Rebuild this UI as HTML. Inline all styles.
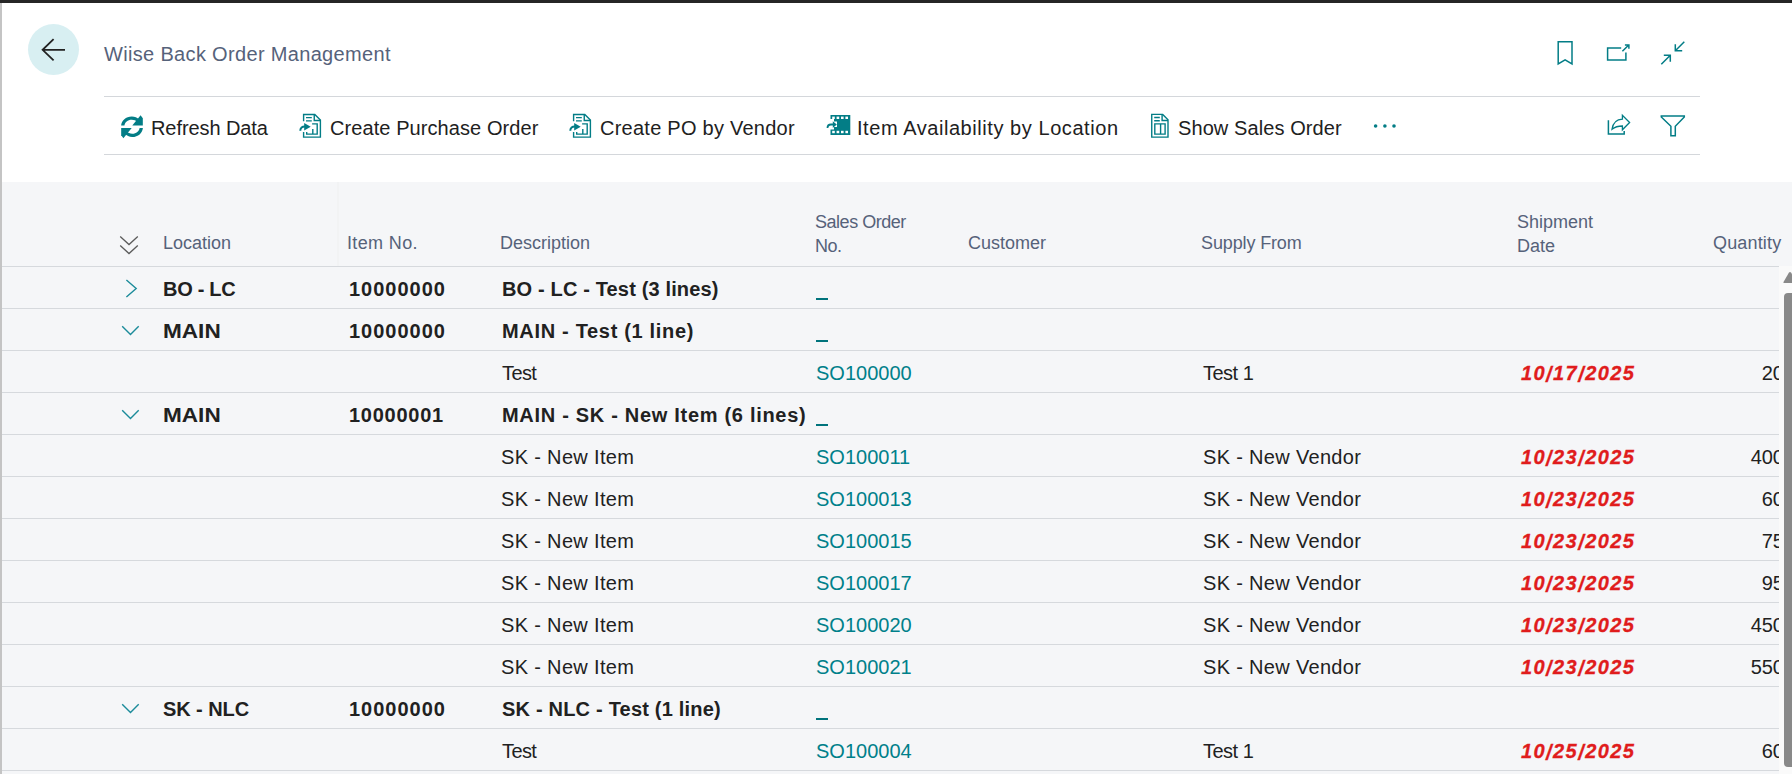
<!DOCTYPE html>
<html><head><meta charset="utf-8">
<style>
html,body{margin:0;padding:0;width:1792px;height:774px;overflow:hidden;background:#fff;}
body{position:relative;font-family:"Liberation Sans",sans-serif;}
.t{position:absolute;white-space:nowrap;line-height:20px;font-size:20px;color:#212121;}
.h{position:absolute;white-space:nowrap;line-height:24px;font-size:18px;color:#56627a;}
.ab{position:absolute;}
#topbar{position:absolute;left:0;top:0;width:1792px;height:3px;background:#262626;}
#leftbar{position:absolute;left:0;top:3px;width:2px;height:771px;background:#c4c4c4;}
#grid{position:absolute;left:2px;top:182px;width:1790px;height:592px;background:#f5f6f8;}
.hl{position:absolute;left:2px;width:1777px;height:1px;background:#d6d9dd;}
.b{font-weight:bold;}
.lnk{color:#00808a;}
.red{color:#e01c1c;font-weight:bold;font-style:italic;-webkit-text-stroke:0.3px #e01c1c;}
.sl{display:inline-block;transform:translateY(1.5px) scaleY(1.12);}
.qclip{position:absolute;left:1600px;width:179px;overflow:hidden;height:42px;}
</style></head>
<body>
<div id="topbar"></div>
<div id="leftbar"></div>

<!-- back button -->
<div class="ab" style="left:28px;top:24px;width:51px;height:51px;border-radius:50%;background:#d8eff2;"></div>
<svg class="ab" style="left:40px;top:36px" width="26" height="26" viewBox="0 0 26 26">
 <path d="M2.6 13.8 H25 M13.6 3.2 L2.6 13.8 L13.6 24.4" fill="none" stroke="#222" stroke-width="1.8"/>
</svg>

<div class="t" style="left:104px;top:44px;color:#56627a;letter-spacing:0.33px;">Wiise Back Order Management</div>

<!-- top right icons -->
<svg class="ab" style="left:1550px;top:35px" width="140" height="36" viewBox="1550 35 140 36">
 <path d="M1558.2 41.7 H1572 V64 L1565.1 59.8 L1558.2 64 Z" fill="none" stroke="#037d86" stroke-width="1.5"/>
 <path d="M1621.2 47.9 H1607.6 V60.1 H1625.9 V52.6" fill="none" stroke="#037d86" stroke-width="1.5"/>
 <path d="M1622.4 51.3 L1629 44.7 M1624.9 44.9 H1628.9 V48.8" fill="none" stroke="#037d86" stroke-width="1.5"/>
 <path d="M1684.3 41.7 L1675.3 50.7 M1675.3 44.2 V50.7 H1682.2" fill="none" stroke="#037d86" stroke-width="1.5"/>
 <path d="M1661.3 64.3 L1670.3 55.3 M1663.8 55.3 H1670.3 V61.8" fill="none" stroke="#037d86" stroke-width="1.5"/>
</svg>

<div class="hl" style="left:104px;width:1596px;top:96px;background:#d4d7db;"></div>
<div class="hl" style="left:104px;width:1596px;top:154px;background:#d4d7db;"></div>

<!-- toolbar -->
<svg class="ab" style="left:120px;top:114px" width="24" height="25" viewBox="0 0 24 25" id="ic-refresh">
 <g fill="#037d86">
 <path d="M1.1 11.6 C1.6 6.7 5.8 2.5 11.8 2.5 C14.8 2.5 17.3 3.7 19.2 5.7 L17.4 8 C15.9 6.6 14 5.8 11.8 5.8 C7.6 5.8 4.9 8.4 4.4 11.6 Z"/>
 <path d="M20.6 1.2 L22.8 4.2 L22.8 11.6 L12.3 11.6 Z"/>
 <g transform="rotate(180 12 12.75)">
 <path d="M1.1 11.6 C1.6 6.7 5.8 2.5 11.8 2.5 C14.8 2.5 17.3 3.7 19.2 5.7 L17.4 8 C15.9 6.6 14 5.8 11.8 5.8 C7.6 5.8 4.9 8.4 4.4 11.6 Z"/>
 <path d="M20.6 1.2 L22.8 4.2 L22.8 11.6 L12.3 11.6 Z"/>
 </g></g>
</svg>
<div class="t" style="left:151px;top:118px;letter-spacing:-0.08px;">Refresh Data</div>

<svg class="ab" style="left:298px;top:113px" width="26" height="27" viewBox="0 0 26 27">
 <g fill="none" stroke="#037d86" stroke-width="1.4">
 <path d="M5.6 8.3 V1.45 H16.8 L22.4 7.1 V24.1 H5.6 V19"/>
 <path d="M16.25 1.45 V7.55 H22.4"/>
 <path d="M8 4.65 H13.8 M8 7.85 H13.8"/>
 <path d="M14.1 10.9 H19.2 V21.1 H8.7 V19 M14.8 16.1 V21.1"/>
 <path d="M2.3 17.8 C2.3 14.8 4.3 13.4 6.8 13.4 H8.5" stroke-width="2"/>
 </g>
 <path d="M6.2 10.1 L12.7 13.8 L6.2 17.5 Z" fill="#037d86"/>
</svg>
<div class="t" style="left:330px;top:118px;letter-spacing:0.08px;">Create Purchase Order</div>

<svg class="ab" style="left:568px;top:113px" width="26" height="27" viewBox="0 0 26 27">
 <g fill="none" stroke="#037d86" stroke-width="1.4">
 <path d="M5.6 8.3 V1.45 H16.8 L22.4 7.1 V24.1 H5.6 V19"/>
 <path d="M16.25 1.45 V7.55 H22.4"/>
 <path d="M8 4.65 H13.8 M8 7.85 H13.8"/>
 <path d="M14.1 10.9 H19.2 V21.1 H8.7 V19 M14.8 16.1 V21.1"/>
 <path d="M2.3 17.8 C2.3 14.8 4.3 13.4 6.8 13.4 H8.5" stroke-width="2"/>
 </g>
 <path d="M6.2 10.1 L12.7 13.8 L6.2 17.5 Z" fill="#037d86"/>
</svg>
<div class="t" style="left:600px;top:118px;letter-spacing:0.25px;">Create PO by Vendor</div>

<svg class="ab" style="left:826px;top:114px" width="26" height="23" viewBox="0 0 26 23" id="ic-avail">
 <path d="M4.5 1 H24.3 V21 H4.5 V15.5 H8 V13 H11 V7.5 H8 V5 H4.5 Z" fill="#037d86"/>
 <g fill="#fff">
  <rect x="6.2" y="2.6" width="2.6" height="2.4"/><rect x="10.6" y="2.6" width="2.6" height="2.4"/><rect x="15" y="2.6" width="2.6" height="2.4"/><rect x="19.4" y="2.6" width="2.6" height="2.4"/>
  <rect x="6.2" y="16.8" width="2.6" height="2.4"/><rect x="10.6" y="16.8" width="2.6" height="2.4"/><rect x="15" y="16.8" width="2.6" height="2.4"/><rect x="19.4" y="16.8" width="2.6" height="2.4"/>
 </g>
 <path d="M1.5 14 C1.5 11.5 3 10.5 5 10.5 H8" fill="none" stroke="#037d86" stroke-width="1.8"/>
 <path d="M6.8 7.3 L10.8 10.6 L6.8 14 Z" fill="#037d86"/>
</svg>
<div class="t" style="left:857px;top:118px;letter-spacing:0.56px;">Item Availability by Location</div>

<svg class="ab" style="left:1149px;top:113px" width="24" height="27" viewBox="0 0 24 27" id="ic-show">
 <g fill="none" stroke="#037d86" stroke-width="1.4">
 <path d="M2.74 1.4 H13.7 L19 6.8 V24.1 H2.74 Z"/>
 <path d="M13.1 1.4 V7.5 H19"/>
 <path d="M5.2 4.5 H10.8 M5.2 7.7 H10.8"/>
 <path d="M5.8 10.9 H16.1 V21.1 H5.8 Z M11.6 10.9 V21.1"/>
 </g>
</svg>
<div class="t" style="left:1178px;top:118px;letter-spacing:0.09px;">Show Sales Order</div>

<svg class="ab" style="left:1370px;top:120px" width="30" height="12" viewBox="0 0 30 12">
 <circle cx="5.6" cy="6" r="1.8" fill="#037d86"/><circle cx="14.9" cy="6" r="1.8" fill="#037d86"/><circle cx="24" cy="6" r="1.8" fill="#037d86"/>
</svg>

<svg class="ab" style="left:1600px;top:108px" width="100" height="35" viewBox="1600 108 100 35">
 <path d="M1608.4 120.3 V134 H1624.2 V131" fill="none" stroke="#037d86" stroke-width="1.5"/>
 <path d="M1612 129.3 C1613 122.5 1617.5 119.3 1622.4 119.1 V115.3 L1629.6 122.5 L1622.4 129.8 V126 C1618.5 126 1614.5 127.3 1612 129.3 Z" fill="none" stroke="#037d86" stroke-width="1.3" stroke-linejoin="miter"/>
 <path d="M1661.3 116 H1684.3 V117 L1675.3 126.3 V135.8 H1670.9 V126.3 L1661.3 117 Z" fill="none" stroke="#037d86" stroke-width="1.5"/>
</svg>

<!-- grid -->
<div id="grid"></div>
<div class="ab" style="left:337px;top:182px;width:2px;height:84px;background:#f2f3f4;"></div>
<div class="ab" style="left:1779px;top:266px;width:13px;height:508px;background:#fafafa;"></div>
<svg class="ab" style="left:1779px;top:266px" width="13" height="508" viewBox="0 0 13 508">
 <path d="M4.5 16 L10 6.5 Q11 5.5 12 6.5 L17.5 16 Q18 17 17 17 H5 Q4 17 4.5 16 Z" fill="#898989"/>
 <path d="M5 31 Q5 27 9 27 H20 V501 H9 Q5 501 5 497 Z" fill="#898989"/>
</svg>

<!-- header -->
<svg class="ab" style="left:118px;top:234px" width="22" height="22" viewBox="0 0 22 22">
 <path d="M2.2 2.6 L11 10.6 L19.8 2.6 M2.2 11.6 L11 19.6 L19.8 11.6" fill="none" stroke="#5b5b5b" stroke-width="1.3"/>
</svg>
<div class="h" style="left:163px;top:231px;">Location</div>
<div class="h" style="left:347px;top:231px;letter-spacing:0.36px;">Item No.</div>
<div class="h" style="left:500px;top:231px;">Description</div>
<div class="h" style="left:815px;top:210px;letter-spacing:-0.47px;">Sales Order<br>No.</div>
<div class="h" style="left:968px;top:231px;">Customer</div>
<div class="h" style="left:1201px;top:231px;letter-spacing:-0.13px;">Supply From</div>
<div class="h" style="left:1517px;top:210px;">Shipment<br>Date</div>
<div class="h" style="left:1713px;top:231px;letter-spacing:0.16px;">Quantity</div>

<div class="hl" style="top:266px"></div>
<!--ROWS-->
<svg class="ab" style="left:122px;top:278px" width="18" height="20" viewBox="0 0 18 20"><path d="M4.4 2 L14.2 10.5 L4.4 19" fill="none" stroke="#1b8b9a" stroke-width="1.4"/></svg>
<div class="t b" style="left:163px;top:279px;letter-spacing:-0.3px;">BO - LC</div>
<div class="t b" style="left:349px;top:279px;letter-spacing:1.0px;">10000000</div>
<div class="t b" style="left:502px;top:279px;letter-spacing:0.15px;">BO - LC - Test (3 lines)</div>
<div class="ab" style="left:816px;top:298px;width:12px;height:2px;background:#00737c;"></div>
<div class="hl" style="top:308px"></div>
<svg class="ab" style="left:118px;top:324px" width="24" height="14" viewBox="0 0 24 14"><path d="M4.2 2.2 L12.5 10.4 L20.7 2.2" fill="none" stroke="#1b8b9a" stroke-width="1.4"/></svg>
<div class="t b" style="left:163px;top:321px;font-size:21px;transform:scaleX(1.075);transform-origin:0 0;top:321px;">MAIN</div>
<div class="t b" style="left:349px;top:321px;letter-spacing:1.0px;">10000000</div>
<div class="t b" style="left:502px;top:321px;letter-spacing:0.68px;">MAIN - Test (1 line)</div>
<div class="ab" style="left:816px;top:340px;width:12px;height:2px;background:#00737c;"></div>
<div class="hl" style="top:350px"></div>
<div class="t" style="left:502px;top:363px;letter-spacing:-0.6px;">Test</div>
<div class="t lnk" style="left:816px;top:363px;">SO100000</div>
<div class="t" style="left:1203px;top:363px;letter-spacing:-0.5px;">Test 1</div>
<div class="t red" style="left:1521px;top:363px;letter-spacing:1.42px;">10<span class="sl">/</span>17<span class="sl">/</span>2025</div>
<div class="qclip" style="top:351px;"><div class="t" style="right:-5px;top:12px;">20</div></div>
<div class="hl" style="top:392px"></div>
<svg class="ab" style="left:118px;top:408px" width="24" height="14" viewBox="0 0 24 14"><path d="M4.2 2.2 L12.5 10.4 L20.7 2.2" fill="none" stroke="#1b8b9a" stroke-width="1.4"/></svg>
<div class="t b" style="left:163px;top:405px;font-size:21px;transform:scaleX(1.075);transform-origin:0 0;top:405px;">MAIN</div>
<div class="t b" style="left:349px;top:405px;letter-spacing:0.75px;">10000001</div>
<div class="t b" style="left:502px;top:405px;letter-spacing:0.7px;">MAIN - SK - New Item (6 lines)</div>
<div class="ab" style="left:816px;top:424px;width:12px;height:2px;background:#00737c;"></div>
<div class="hl" style="top:434px"></div>
<div class="t" style="left:501px;top:447px;letter-spacing:0.33px;">SK - New Item</div>
<div class="t lnk" style="left:816px;top:447px;">SO100011</div>
<div class="t" style="left:1203px;top:447px;letter-spacing:0.32px;">SK - New Vendor</div>
<div class="t red" style="left:1521px;top:447px;letter-spacing:1.42px;">10<span class="sl">/</span>23<span class="sl">/</span>2025</div>
<div class="qclip" style="top:435px;"><div class="t" style="right:-5px;top:12px;">400</div></div>
<div class="hl" style="top:476px"></div>
<div class="t" style="left:501px;top:489px;letter-spacing:0.33px;">SK - New Item</div>
<div class="t lnk" style="left:816px;top:489px;">SO100013</div>
<div class="t" style="left:1203px;top:489px;letter-spacing:0.32px;">SK - New Vendor</div>
<div class="t red" style="left:1521px;top:489px;letter-spacing:1.42px;">10<span class="sl">/</span>23<span class="sl">/</span>2025</div>
<div class="qclip" style="top:477px;"><div class="t" style="right:-5px;top:12px;">60</div></div>
<div class="hl" style="top:518px"></div>
<div class="t" style="left:501px;top:531px;letter-spacing:0.33px;">SK - New Item</div>
<div class="t lnk" style="left:816px;top:531px;">SO100015</div>
<div class="t" style="left:1203px;top:531px;letter-spacing:0.32px;">SK - New Vendor</div>
<div class="t red" style="left:1521px;top:531px;letter-spacing:1.42px;">10<span class="sl">/</span>23<span class="sl">/</span>2025</div>
<div class="qclip" style="top:519px;"><div class="t" style="right:-5px;top:12px;">75</div></div>
<div class="hl" style="top:560px"></div>
<div class="t" style="left:501px;top:573px;letter-spacing:0.33px;">SK - New Item</div>
<div class="t lnk" style="left:816px;top:573px;">SO100017</div>
<div class="t" style="left:1203px;top:573px;letter-spacing:0.32px;">SK - New Vendor</div>
<div class="t red" style="left:1521px;top:573px;letter-spacing:1.42px;">10<span class="sl">/</span>23<span class="sl">/</span>2025</div>
<div class="qclip" style="top:561px;"><div class="t" style="right:-5px;top:12px;">95</div></div>
<div class="hl" style="top:602px"></div>
<div class="t" style="left:501px;top:615px;letter-spacing:0.33px;">SK - New Item</div>
<div class="t lnk" style="left:816px;top:615px;">SO100020</div>
<div class="t" style="left:1203px;top:615px;letter-spacing:0.32px;">SK - New Vendor</div>
<div class="t red" style="left:1521px;top:615px;letter-spacing:1.42px;">10<span class="sl">/</span>23<span class="sl">/</span>2025</div>
<div class="qclip" style="top:603px;"><div class="t" style="right:-5px;top:12px;">450</div></div>
<div class="hl" style="top:644px"></div>
<div class="t" style="left:501px;top:657px;letter-spacing:0.33px;">SK - New Item</div>
<div class="t lnk" style="left:816px;top:657px;">SO100021</div>
<div class="t" style="left:1203px;top:657px;letter-spacing:0.32px;">SK - New Vendor</div>
<div class="t red" style="left:1521px;top:657px;letter-spacing:1.42px;">10<span class="sl">/</span>23<span class="sl">/</span>2025</div>
<div class="qclip" style="top:645px;"><div class="t" style="right:-5px;top:12px;">550</div></div>
<div class="hl" style="top:686px"></div>
<svg class="ab" style="left:118px;top:702px" width="24" height="14" viewBox="0 0 24 14"><path d="M4.2 2.2 L12.5 10.4 L20.7 2.2" fill="none" stroke="#1b8b9a" stroke-width="1.4"/></svg>
<div class="t b" style="left:163px;top:699px;letter-spacing:-0.08px;">SK - NLC</div>
<div class="t b" style="left:349px;top:699px;letter-spacing:1.0px;">10000000</div>
<div class="t b" style="left:502px;top:699px;letter-spacing:0.2px;">SK - NLC - Test (1 line)</div>
<div class="ab" style="left:816px;top:718px;width:12px;height:2px;background:#00737c;"></div>
<div class="hl" style="top:728px"></div>
<div class="t" style="left:502px;top:741px;letter-spacing:-0.6px;">Test</div>
<div class="t lnk" style="left:816px;top:741px;">SO100004</div>
<div class="t" style="left:1203px;top:741px;letter-spacing:-0.5px;">Test 1</div>
<div class="t red" style="left:1521px;top:741px;letter-spacing:1.42px;">10<span class="sl">/</span>25<span class="sl">/</span>2025</div>
<div class="qclip" style="top:729px;"><div class="t" style="right:-5px;top:12px;">60</div></div>
<div class="hl" style="top:770px"></div>
<!--/ROWS-->
</body></html>
